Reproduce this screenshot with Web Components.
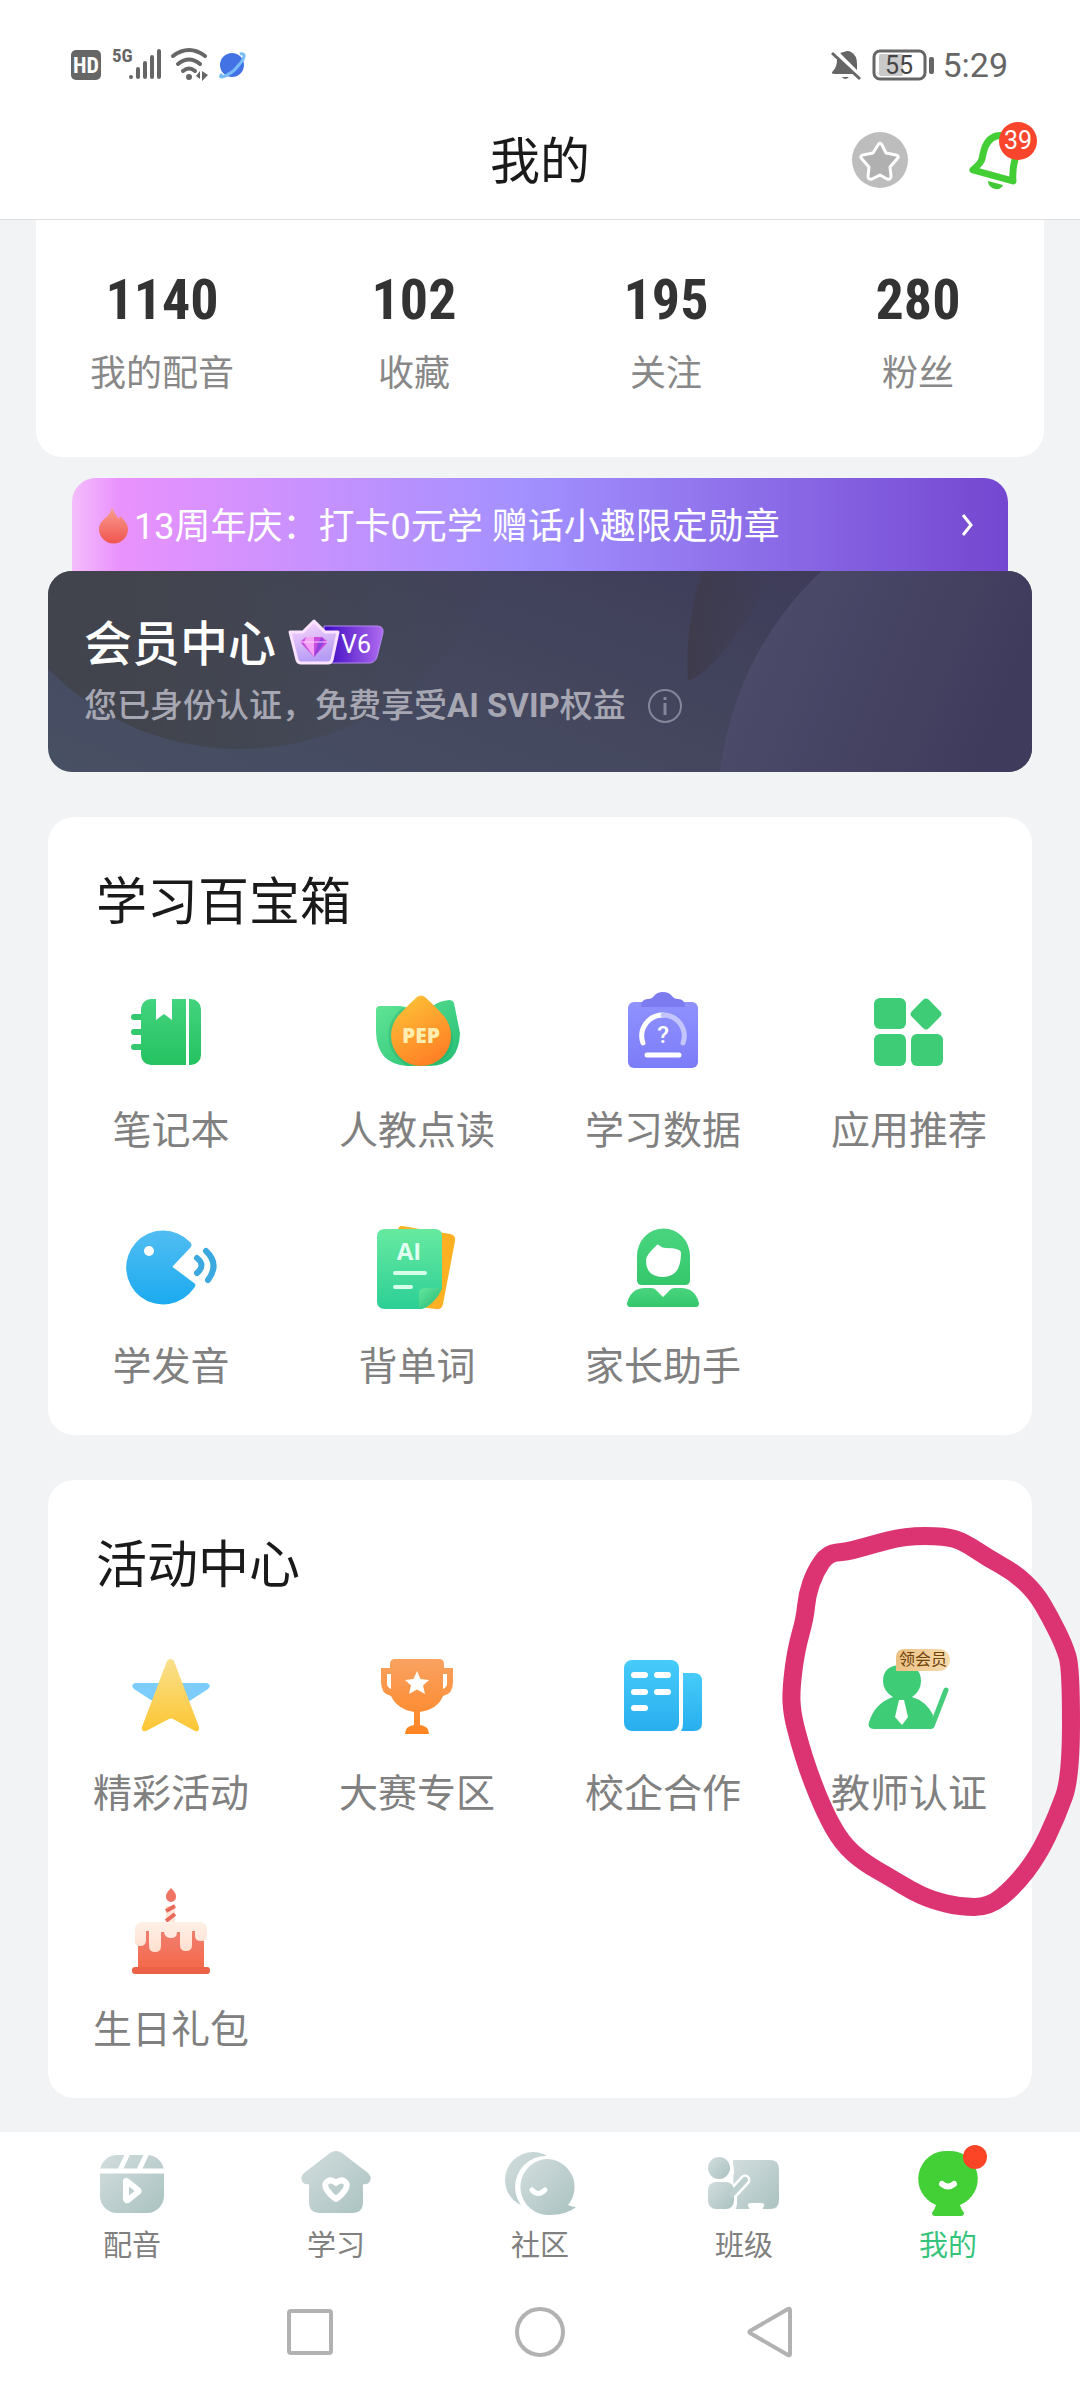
<!DOCTYPE html>
<html lang="zh-CN">
<head>
<meta charset="utf-8">
<meta name="viewport" content="width=device-width, initial-scale=1">
<title>我的</title>
<style>
	body {
		margin: 0;
		background: #f2f3f5;
		font-family: Roboto, "Noto Sans CJK SC", sans-serif;
		color: #1a1a1a;
	}
</style>
</head>
<body>
<profile-page>
	<status-bar slot="top"></status-bar>
	<page-header slot="top" count="39">我的</page-header>

	<stat-card>
		<stat-item value="1140">我的配音</stat-item>
		<stat-item value="102">收藏</stat-item>
		<stat-item value="195">关注</stat-item>
		<stat-item value="280">粉丝</stat-item>
	</stat-card>

	<promo-banner>13周年庆：打卡0元学 赠话小趣限定勋章</promo-banner>
	<vip-card level="V6">
		<span slot="title">会员中心</span>
		您已身份认证，免费享受<b>AI SVIP</b>权益
	</vip-card>

	<menu-card heading="学习百宝箱">
		<menu-entry icon="notebook">笔记本</menu-entry>
		<menu-entry icon="pep">人教点读</menu-entry>
		<menu-entry icon="data">学习数据</menu-entry>
		<menu-entry icon="apps">应用推荐</menu-entry>
		<menu-entry icon="speak">学发音</menu-entry>
		<menu-entry icon="words">背单词</menu-entry>
		<menu-entry icon="parent">家长助手</menu-entry>
	</menu-card>

	<menu-card heading="活动中心">
		<menu-entry icon="star">精彩活动</menu-entry>
		<menu-entry icon="trophy">大赛专区</menu-entry>
		<menu-entry icon="school">校企合作</menu-entry>
		<menu-entry icon="teacher" tag="领会员">教师认证<ink-ring slot="mark"></ink-ring></menu-entry>
		<menu-entry icon="cake">生日礼包</menu-entry>
	</menu-card>

	<tab-bar slot="bottom">
		<tab-item icon="dub">配音</tab-item>
		<tab-item icon="home">学习</tab-item>
		<tab-item icon="chat">社区</tab-item>
		<tab-item icon="class">班级</tab-item>
		<tab-item icon="me" active>我的</tab-item>
	</tab-bar>
	<system-nav slot="bottom"></system-nav>
</profile-page>

<script>
const grad = (id, from, to, x2 = 0, y2 = 1) =>
	`<linearGradient id="${id}" x1="0" y1="0" x2="${x2}" y2="${y2}"><stop stop-color="${from}"/><stop offset="1" stop-color="${to}"/></linearGradient>`;

const grey = grad('g', '#d3dddd', '#a9c2c1', 1, 1);

//menu icons use a 96 box, tab icons a 72 box
const ICONS = {
	notebook: `<svg viewBox="0 0 96 96"><defs>${grad('g', '#43d37e', '#25c261')}</defs>
		<path d="M11 33h9M11 48h9M11 63h9" stroke="#33c76e" stroke-width="6" stroke-linecap="round"/>
		<path fill="url(#g)" d="M28 15h5v21l8-6 8 6V15h14v66H28a10 10 0 0 1-10-10V25a10 10 0 0 1 10-10z"/>
		<path fill="url(#g)" d="M66 15h2a10 10 0 0 1 10 10v46a10 10 0 0 1-10 10h-2z"/></svg>`,
	pep: `<svg viewBox="0 0 96 96"><defs>${grad('g', '#63e696', '#23bd74', 1, 1)}${grad('o', '#fcc838', '#ff8226', .5, 1)}</defs>
		<path fill="url(#g)" d="M7 26q0-4 4-4h20q12 0 21 16Q60 18 80 16q4 0 5 3l6 30Q90 82 60 82H38Q8 80 7 48z"/>
		<path fill="#1b9f5c" opacity=".3" d="M33 24Q17 38 20 56q2 16 17 25h30q16-9 17-26-1-16-13-27z"/>
		<path fill="url(#o)" d="M48 13q4-3 8 0 10 9 19 19 7 9 7 20a30 30 0 0 1-60 0q0-11 7-20 9-10 19-19z"/>
		<text x="52" y="59" font-family="Open Sans" font-size="21" font-weight="800" text-anchor="middle" fill="#ffedaf">PEP</text></svg>`,
	data: `<svg viewBox="0 0 96 96"><defs>${grad('g', '#8f92ff', '#7d7cf8')}</defs>
		<rect x="13" y="18" width="70" height="66" rx="6" fill="url(#g)"/>
		<path fill="#7c7cf0" d="M26 23q0-8 7-8 4 0 6-3 3-4 9-4t9 4q2 3 6 3 7 0 7 8z"/>
		<path d="M28 59A21 21 0 0 1 48 31" fill="none" stroke="#fff" stroke-width="5" stroke-linecap="round"/>
		<path d="M48 31A21 21 0 0 1 68 59" fill="none" stroke="#c4c5ff" stroke-width="5" stroke-linecap="round"/>
		<text x="48" y="59" font-family="Roboto" font-size="24" font-weight="500" text-anchor="middle" fill="#fff">?</text>
		<path d="M32 71h32" stroke="#fff" stroke-width="5" stroke-linecap="round"/></svg>`,
	apps: `<svg viewBox="0 0 96 96" fill="#3ecd76">
		<rect x="13" y="14" width="32" height="31" rx="6"/><rect x="13" y="50" width="32" height="32" rx="6"/><rect x="50" y="50" width="32" height="32" rx="6"/>
		<rect x="53" y="18" width="24" height="24" rx="4" transform="rotate(45 65 30)"/></svg>`,
	speak: `<svg viewBox="0 0 96 96"><defs>${grad('g', '#51bdf2', '#1caaf0')}</defs>
		<path fill="url(#g)" d="M67 22q3 3 0 6L50 46q-1 1 1 2l20 15q3 2 0 5A37 37 0 1 1 67 22z"/><circle cx="26" cy="31" r="5" fill="#fff"/>
		<path d="M74 38q9 7 0 15M83 31q14 13 2 29" fill="none" stroke="#3ba9df" stroke-width="6" stroke-linecap="round"/></svg>`,
	words: `<svg viewBox="0 0 96 96"><defs>${grad('g', '#67eaa0', '#2ccf96')}${grad('f', '#63e79b', '#26b978', 1, 1)}</defs>
		<path fill="#fdb022" d="M29 9q1-3 4-3l48 8q6 1 5 7L74 84q-1 6-7 5l-17-2z"/>
		<path fill="url(#g)" d="M16 9h50q7 0 7 7v52Q62 88 52 89H16q-8 0-8-8V17q0-8 8-8z"/>
		<path fill="url(#f)" d="M50 88V74q0-6 6-6h17Q66 86 50 88z"/>
		<text x="40" y="40" font-family="Open Sans" font-size="24" font-weight="700" text-anchor="middle" fill="#dffff0">AI</text>
		<path d="M26 53h30M26 67h16" stroke="#d6ffec" stroke-width="4" stroke-linecap="round"/></svg>`,
	parent: `<svg viewBox="0 0 96 96"><defs>${grad('g', '#49d57f', '#35c76c')}</defs>
		<path fill="url(#g)" fill-rule="evenodd" d="M22 36a26 27 0 0 1 53 0v24q0 5-5 5H27q-5 0-5-5zM41 26q1-3 4 0 2 2 6 2 15 0 15 5 0 24-18 24-17 0-17-17 0-5 10-14z"/>
		<path fill="url(#g)" d="M12 83q4-15 18-15h6q4 0 6 3l6 6 6-6q2-3 6-3h6q14 0 18 15 0 4-3 4H15q-3 0-3-4z"/></svg>`,
	star: `<svg viewBox="0 0 96 96"><defs>${grad('g', '#f9e08c', '#fdc634')}</defs>
		<path fill="#7ccdfc" d="M12 36h72q5 2 1 6L48 66 11 42q-4-4 1-6z"/>
		<path fill="url(#g)" d="M44 14q4-4 7 0l25 66q1 5-4 4L50 72q-2-1-4 0L23 84q-5 1-4-4z"/></svg>`,
	trophy: `<svg viewBox="0 0 96 96"><defs>${grad('g', '#f9a261', '#ff8421')}</defs>
		<path fill="url(#g)" fill-rule="evenodd" d="M26 12h44q5 0 5 5v4h9v14q0 12-10 14-5 13-23 16v13q9 1 9 9H36q0-8 9-9V65Q28 62 22 49q-10-2-10-14V21h9v-4q0-5 5-5zM18 27v10q0 3 4 5V27zM74 27v15q4-2 4-5V27z"/>
		<path fill="#fff" d="m48 24 3.500 8 8.500 1-6 5.500 2 8.500-8-4.500-8 4.500 2-8.500-6-5.500 8.500-1z"/></svg>`,
	school: `<svg viewBox="0 0 96 96"><defs>${grad('g', '#47cbfa', '#28aeee')}</defs>
		<rect x="9" y="13" width="55" height="71" rx="8" fill="url(#g)"/><path fill="url(#g)" d="M68 26h11q8 0 8 8v42q0 8-8 8H66q2-3 2-8z"/>
		<path d="M19 28h11M42 28h11M19 45h11M42 45h11M19 61h11" stroke="#fff" stroke-width="6" stroke-linecap="round"/></svg>`,
	teacher: `<svg viewBox="0 0 96 96" fill="#3ecd76">
		<path d="M22 34q0-16 19-16t19 16q0 10-9 16 14 4 21 18l-1 14H13q-7 0-5-7 6-19 24-25-10-6-10-16z"/>
		<path d="M85 43 71 79" stroke="#43cd7a" stroke-width="5" stroke-linecap="round"/>
		<path fill="#fff" d="M38 53h5l4 17-6 8-7-8z"/></svg>`,
	cake: `<svg viewBox="0 0 96 96"><defs>${grad('g', '#f08072', '#f4694a')}${grad('i', '#fff0e7', '#ffdfcf')}</defs>
		<path fill="#ef7464" d="M48 5q6 6 5 9a5 5 0 0 1-10 0q-1-3 5-9z"/>
		<path fill="#ffe5d9" d="M43 23h9v17h-9z"/><path d="M43 28l9-5M43 38l9-7" stroke="#e9695b" stroke-width="4"/>
		<path fill="url(#g)" d="M15 46h66v39H15z"/>
		<path fill="url(#i)" d="M20 39h56q8 0 8 8v6q0 5-6 5t-6-5v-5h-3v14q0 6-6 6t-6-6V49h-3q0 6-6 6t-7-6h-3v14q0 6-6 6t-6-6V48h-3v9q0 6-6 6t-5-6V47q0-8 8-8z"/>
		<rect x="9" y="84" width="78" height="7" rx="3" fill="#ec6247"/></svg>`,
	dub: `<svg viewBox="0 0 72 72"><defs>${grey}</defs>
		<rect x="4" y="7" width="64" height="58" rx="17" fill="url(#g)"/>
		<path d="M3 23h66M32 5 24 22M51 5 43 22" stroke="#fff" stroke-width="5"/>
		<path fill="none" stroke="#fff" stroke-width="6" stroke-linejoin="round" d="M30 33v18q0 2 2 1l10-8q1-1 0-2l-10-8q-2-1-2-1z"/></svg>`,
	home: `<svg viewBox="0 0 72 72"><defs>${grey}</defs>
		<path fill="url(#g)" d="M30 5q6-4 12 0l26 20q4 4 2 8t-7 3v18q0 11-11 11H20Q9 65 9 54V36q-5 1-7-3t2-8z"/>
		<path fill="none" stroke="#fff" stroke-width="6" stroke-linejoin="round" d="M36 35q4-4 8-2 5 3 1 9-3 5-9 9-6-4-9-9-4-6 1-9 4-2 8 2z"/></svg>`,
	chat: `<svg viewBox="0 0 72 72"><defs>${grey}</defs>
		<circle cx="29" cy="32" r="28" fill="url(#g)"/><circle cx="42" cy="39" r="31" fill="#fff"/>
		<path fill="url(#g)" d="M42 11a28 28 0 0 1 22 46q4 2 8 2-8 7-25 8A28 28 0 0 1 42 11z"/>
		<path d="M28 42q6 7 13 0" fill="none" stroke="#fff" stroke-width="5" stroke-linecap="round"/></svg>`,
	class: `<svg viewBox="0 0 72 72"><defs>${grey}</defs>
		<path fill="url(#g)" d="M25 12h37q9 0 9 9v31q0 9-9 9H26z"/>
		<path fill="#fff" d="M43 55h10q4 0 3 3l-2 4H42l-2-4q-1-3 3-3zM15 7q12 4 11 18l-2 7q-6 3-4 8h9l4 1-4 4v10q0 5-3 8H15z"/>
		<path d="m25 45 12-13" stroke="#fff" stroke-width="11" stroke-linecap="round"/>
		<circle cx="11" cy="20" r="11" fill="url(#g)"/><rect y="34" width="26" height="27" rx="8" fill="url(#g)"/>
		<path d="M24 46 37 32" stroke="#bdcfce" stroke-width="6" stroke-linecap="round"/></svg>`,
	me: `<svg viewBox="0 0 72 72"><path fill="#43cf36" d="M36 3a28 28 0 0 1 12 54q1 4 4 8 0 3-3 3H23q-3 0-3-3 3-4 4-8A28 28 0 0 1 36 3z"/>
		<path d="M30 36q6 5 12 0" fill="none" stroke="#fff" stroke-width="6" stroke-linecap="round"/>
		<circle cx="63" cy="9" r="12" fill="#fb4526"/></svg>`
};

//every element renders its template into an open shadow root
class BaseElement extends HTMLElement {
	constructor() {
		super();
		this.attachShadow({ mode: 'open' });
	}

	connectedCallback() {
		this.shadowRoot.innerHTML = `
			<style>
				:host, * { box-sizing: border-box; }
				svg { display: block; overflow: visible; }
				h1, h2, p { margin: 0; font-weight: 400; }
				a { color: inherit; text-decoration: none; }
				button { border: 0; padding: 0; background: none; font: inherit; color: inherit; }
			</style>
			${this.render()}
		`;
	}

	attr(name) {
		return this.getAttribute(name) || '';
	}
}

class ProfilePage extends BaseElement {
	render() {
		return `
			<style>
				:host { display: flex; flex-direction: column; min-height: 100vh; overflow-x: hidden; }
				header { background: #fff; border-bottom: 1px solid #dcdddf; }
				main { flex: 1; padding-bottom: 34px; }
				footer { background: #fff; }
			</style>
			<header><slot name="top"></slot></header>
			<main><slot></slot></main>
			<footer><slot name="bottom"></slot></footer>
		`;
	}
}

class StatusBar extends BaseElement {
	render() {
		return `
			<style>
				:host { display: flex; justify-content: space-between; align-items: center; height: 100px; padding: 30px 72px 0 71px; color: #666; }
				div { display: flex; align-items: center; }
				.right { gap: 7px; }
				time { font-size: 34px; line-height: 40px; }
			</style>
			<div>
				<svg width="174" height="36" viewBox="0 0 174 36" fill="#666">
					<rect y="3" width="30" height="30" rx="5"/>
					<text x="15" y="26" font-family="Roboto Condensed, Roboto" font-size="22" font-weight="700" text-anchor="middle" fill="#fff">HD</text>
					<text x="41" y="15" font-family="Roboto Condensed, Roboto" font-size="19" font-weight="700">5G</text>
					<path d="M60 30v0M67 22v8M74 16v14M81 10v20M88 4v26" stroke="#666" stroke-width="4" stroke-linecap="round"/>
					<path d="M102 9q16-12 32 0M107 17q11-9 22 0M112 24q6-5 12 0" fill="none" stroke="#666" stroke-width="4" stroke-linecap="round"/>
					<circle cx="118" cy="30" r="3"/><path d="m125 29 4-5v8zM131 24l6 4-6 6z"/>
					<circle cx="161" cy="18" r="12" fill="#4272e4"/>
					<path d="M151 27q-3 3 0 3 10-3 16-11 7-8 6-11-1-2-4-1" fill="none" stroke="#78bdf8" stroke-width="3"/>
				</svg>
			</div>
			<div class="right">
				<svg width="104" height="36" viewBox="0 0 104 36" fill="#666">
					<path d="M8 9q1-4 5-4 4-2 7 0 6 3 6 12v10H4q-5 0-2-3 4-4 4-11z"/><path d="M11 30h7q-4 4-7 0z"/>
					<path d="m4 4 26 26" stroke="#fff" stroke-width="4"/><path d="m1 6 28 26" stroke="#666" stroke-width="3"/>
					<rect x="48" y="7" width="24" height="22" rx="2" fill="#c9c9c9"/>
					<rect x="43" y="4" width="51" height="28" rx="6" fill="none" stroke="#666" stroke-width="3"/>
					<rect x="98" y="10" width="5" height="17" rx="2"/>
					<text x="68" y="27" font-family="Roboto" font-size="25" text-anchor="middle" fill="#444">55</text>
				</svg>
				<time>5:29</time>
			</div>
		`;
	}
}

class PageHeader extends BaseElement {
	render() {
		return `
			<style>
				:host { display: grid; grid-template-columns: 1fr auto 1fr; align-items: center; height: 119px; padding: 0 40px; }
				h1 { grid-column: 2; padding-top: 4px; font-size: 50px; line-height: 60px; }
				div { display: flex; justify-content: flex-end; align-items: center; gap: 60px; }
				button { position: relative; }
				.badge { position: absolute; top: -7px; right: 3px; width: 38px; height: 38px; border-radius: 50%; background: #f9452b; color: #fff; font-size: 25px; line-height: 38px; text-align: center; }
			</style>
			<h1><slot></slot></h1>
			<div>
				<button aria-label="收藏">
					<svg width="56" height="56" viewBox="0 0 56 56"><circle cx="28" cy="28" r="28" fill="#bdbdbd"/>
						<path fill="#b0b0b0" stroke="#fff" stroke-width="3" stroke-linejoin="round" d="M26 13q2-4 4 0l4 8 10 2q4 1 1 4l-7 8 1 9q0 4-4 3l-7-4-8 4q-4 1-4-3l1-9-7-8q-3-3 1-4l10-2z"/></svg>
				</button>
				<button aria-label="消息">
					<svg width="72" height="62" viewBox="0 0 72 62">
						<path fill="none" stroke="#43ce35" stroke-width="7" stroke-linejoin="round" d="M38 7q-15-3-21 11-2 6-3 12-1 4-9 11l40 11q-1-10 2-22 3-21-9-23z"/>
						<path fill="#43c935" d="m20 52 15 4q-2 5-8 4-7-2-7-8z"/></svg>
					<span class="badge">${this.attr('count')}</span>
				</button>
			</div>
		`;
	}
}

class StatCard extends BaseElement {
	render() {
		return `
			<style>
				:host { display: grid; grid-template-columns: repeat(4, 1fr); margin: 0 36px; padding: 46px 0 61px; background: #fff; border-radius: 0 0 26px 26px; }
			</style>
			<slot></slot>
		`;
	}
}

class StatItem extends BaseElement {
	render() {
		return `
			<style>
				:host { display: block; text-align: center; }
				a { display: flex; flex-direction: column; gap: 18px; }
				strong { font: 700 56px/68px "Roboto Condensed", Roboto, sans-serif; color: #333; }
				span { font-size: 36px; line-height: 44px; color: #888; }
			</style>
			<a href="#"><strong>${this.attr('value')}</strong><span><slot></slot></span></a>
		`;
	}
}

class PromoBanner extends BaseElement {
	render() {
		return `
			<style>
				:host { display: block; margin: 21px 72px 0; }
				a { display: flex; align-items: center; height: 93px; padding: 0 35px 0 27px; border-radius: 24px 24px 0 0; background: linear-gradient(90deg, #f4bdfb, #e992fd 5%, #a391ff 48%, #7447d0); color: #fff; font-size: 36px; line-height: 44px; }
				.text { flex: 1; padding: 4px 0 0 6px; white-space: nowrap; }
			</style>
			<a href="#">
				<svg width="29" height="36" viewBox="0 0 29 36"><defs>${grad('g', '#f7a091', '#f0544f')}</defs>
					<path fill="url(#g)" d="M13 0q2 6 7 12l1-3q8 7 8 13a14 14 0 0 1-29 0q0-5 5-10 7-5 8-12z"/></svg>
				<span class="text"><slot></slot></span>
				<svg width="12" height="22" viewBox="0 0 12 22"><path d="m2 1 8 10-8 10" fill="none" stroke="#fff" stroke-width="3"/></svg>
			</a>
		`;
	}
}

class VipCard extends BaseElement {
	render() {
		return `
			<style>
				:host { display: grid; gap: 10px; margin: 0 48px; padding: 42px 36px 43px; border-radius: 24px; overflow: hidden; position: relative; background: linear-gradient(20deg, #485064, #44475e 45%, #3c3858); }
				.art { position: absolute; inset: 0; width: 100%; height: 100%; }
				.row { display: flex; align-items: center; position: relative; }
				.title { gap: 12px; height: 60px; color: #fff; }
				h2 { padding-top: 4px; font-size: 48px; line-height: 60px; font-weight: 500; }
				.note { gap: 22px; color: #a6a7b3; font-size: 33px; line-height: 46px; }
				p { font-weight: 500; }
			</style>
			<svg class="art" viewBox="0 0 984 201" preserveAspectRatio="xMaxYMid slice" aria-hidden="true">
				<defs>
					<linearGradient id="a"><stop offset=".3" stop-color="#41444c"/><stop offset="1" stop-color="#41444c" stop-opacity="0"/></linearGradient>
					<linearGradient id="b"><stop stop-color="#3e3b4c"/><stop offset="1" stop-color="#3e3b4c" stop-opacity="0"/></linearGradient>
					${grad('c', '#50506e', '#3f3b5c', .5, .2)}
				</defs>
				<circle cx="192" cy="-92" r="270" fill="url(#a)"/>
				<path d="M654 0q-18 60-14 110 30-10 90-110z" fill="url(#b)"/>
				<circle cx="995" cy="238" r="325" fill="url(#c)"/>
			</svg>
			<div class="row title">
				<h2><slot name="title"></slot></h2>
				<svg width="96" height="46" viewBox="0 0 96 46">
					<defs>${grad('p', '#3a08c0', '#b06bf0', 1, 0)}${grad('q', '#ffd9fb', '#b59cf5', .3, 1)}</defs>
					<path fill="url(#p)" stroke="#b58af2" d="M36 6h53q7 0 6 7l-6 24q-2 6-8 6H36z"/>
					<path fill="url(#q)" stroke="#fbe3ff" stroke-width="3" stroke-linejoin="round" d="m2 12 13 0L26 1l11 11 13 0-6 28q-1 3-4 3H13q-3 0-4-3z"/>
					<path fill="#c94be0" d="m12 22 6-5h16l6 5-14 15z"/><path fill="#f3a0f5" d="m18 17-2 6 10 14V17z"/><path fill="#8e42dd" d="m34 17 2 6-10 14 4-14z"/>
					<path d="M12 22h28" stroke="#fbd0ff"/>
					<text x="68" y="33" font-family="Roboto" font-size="25" text-anchor="middle" fill="#fff">${this.attr('level')}</text>
				</svg>
			</div>
			<div class="row note">
				<p><slot></slot></p>
				<svg width="34" height="34" viewBox="0 0 34 34" fill="none" stroke="#85869a" stroke-width="2"><circle cx="17" cy="17" r="16"/><path d="M17 14v12M17 8v3" stroke-width="3"/></svg>
			</div>
		`;
	}
}

class MenuCard extends BaseElement {
	render() {
		return `
			<style>
				:host { display: block; margin: 45px 48px 0; padding: 56px 0 42px; background: #fff; border-radius: 26px; }
				h2 { padding-left: 48px; font-size: 51px; line-height: 60px; }
				nav { display: grid; grid-template-columns: repeat(4, 1fr); row-gap: 63px; margin-top: 51px; }
			</style>
			<h2>${this.attr('heading')}</h2>
			<nav><slot></slot></nav>
		`;
	}
}

class MenuEntry extends BaseElement {
	render() {
		const tag = this.attr('tag');
		return `
			<style>
				:host { display: block; position: relative; }
				a { display: flex; flex-direction: column; align-items: center; gap: 25px; }
				.icon { position: relative; width: 96px; height: 96px; }
				.label { font-size: 39px; line-height: 52px; color: #808080; white-space: nowrap; }
				.tag { position: absolute; top: 2px; left: 35px; padding: 0 3px; border-radius: 8px 11px 11px 0; background: linear-gradient(90deg, #eac084, #f8dcae); color: #70420a; font-size: 16px; line-height: 22px; white-space: nowrap; }
			</style>
			<a href="#">
				<span class="icon">${ICONS[this.attr('icon')]}${tag ? `<span class="tag">${tag}</span>` : ''}</span>
				<span class="label"><slot></slot></span>
			</a>
			<slot name="mark"></slot>
		`;
	}
}

//hand drawn circle lying over its entry
class InkRing extends BaseElement {
	//curves through the middle of each segment, so the corners come out rounded
	path(points) {
		const mid = (a, b) => [(a[0] + b[0]) / 2, (a[1] + b[1]) / 2];
		const start = mid(points[points.length - 1], points[0]);
		const curves = points.map((p, i) => `Q${p} ${mid(p, points[(i + 1) % points.length])}`);
		return `M${start}${curves.join('')}z`;
	}

	render() {
		const points = [
			[48, 33], [66, 32], [91, 25], [125, 16], [165, 16], [184, 22], [208, 38], [235, 53], [256, 73], [270, 97],
			[284, 125], [291, 148], [291, 257], [277, 296], [258, 336], [234, 367], [209, 387], [180, 387], [152, 380], [132, 371],
			[111, 358], [83, 342], [62, 323], [45, 293], [29, 253], [19, 221], [12, 193], [11, 170], [16, 130], [25, 98],
			[27, 75], [35, 52]
		];
		return `
			<style>
				:host { position: absolute; top: -127px; right: -48px; width: 300px; height: 400px; overflow: hidden; pointer-events: none; z-index: 2; }
			</style>
			<svg width="300" height="400" viewBox="0 0 300 400" aria-hidden="true">
				<path fill="none" stroke="#dc3373" stroke-width="18" stroke-linejoin="round" d="${this.path(points)}"/>
			</svg>
		`;
	}
}

class TabBar extends BaseElement {
	render() {
		return `
			<style>
				:host { display: grid; grid-template-columns: repeat(5, 1fr); padding: 16px 30px 0; }
			</style>
			<slot></slot>
		`;
	}
}

class TabItem extends BaseElement {
	render() {
		return `
			<style>
				:host { display: block; color: #808080; }
				:host([active]) { color: #36c47c; }
				a { display: flex; flex-direction: column; align-items: center; gap: 6px; font-size: 29px; line-height: 40px; }
				svg { width: 72px; height: 72px; }
			</style>
			<a href="#">${ICONS[this.attr('icon')]}<span><slot></slot></span></a>
		`;
	}
}

class SystemNav extends BaseElement {
	render() {
		return `
			<style>
				:host { display: grid; grid-template-columns: repeat(3, 1fr); padding: 10px 18% 0; height: 122px; }
				button { display: flex; align-items: center; justify-content: center; }
				svg { fill: none; stroke: #b2b2b2; stroke-width: 4; stroke-linejoin: round; }
			</style>
			<button aria-label="最近任务"><svg width="52" height="52"><rect x="5" y="5" width="42" height="42" rx="2"/></svg></button>
			<button aria-label="主屏幕"><svg width="52" height="52"><circle cx="26" cy="26" r="23"/></svg></button>
			<button aria-label="返回"><svg width="52" height="52"><path d="M44 3q2-1 2 1v44q0 2-2 1L6 27q-1-1 0-2z"/></svg></button>
		`;
	}
}

customElements.define('profile-page', ProfilePage);
customElements.define('status-bar', StatusBar);
customElements.define('page-header', PageHeader);
customElements.define('stat-card', StatCard);
customElements.define('stat-item', StatItem);
customElements.define('promo-banner', PromoBanner);
customElements.define('vip-card', VipCard);
customElements.define('menu-card', MenuCard);
customElements.define('menu-entry', MenuEntry);
customElements.define('ink-ring', InkRing);
customElements.define('tab-bar', TabBar);
customElements.define('tab-item', TabItem);
customElements.define('system-nav', SystemNav);
</script>
</body>
</html>
